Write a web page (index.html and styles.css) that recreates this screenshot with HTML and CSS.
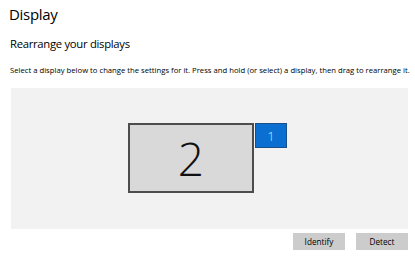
FILE: index.html
```html
<!DOCTYPE html>
<html lang="en">
<head>
	<meta charset="UTF-8" />
	<title>Display</title>
	<link rel="stylesheet" href="styles.css">
</head>
<body>
	<h1 class="title">Display</h1>
	<h2 class="subtitle">Rearrange your displays</h2>
	<p class="hint">Select a display below to change the settings for it. Press and hold (or select) a display, then drag to rearrange it.</p>

	<div class="arrange">
		<div class="monitor monitor-2">2</div>
		<div class="monitor monitor-1">1</div>
	</div>

	<div class="actions">
		<button>Identify</button>
		<button>Detect</button>
	</div>
</body>
</html>
```

FILE: styles.css
```css
body {
	margin: 0;
	padding: 0 7px 0 9px;
	font-family: "Open Sans", "Noto Sans", sans-serif;
	background-color: #fff;
	color: #000;
}
.title {
	margin: 0;
	padding-top: 3px;
	font-size: 15px;
	font-weight: normal;
	line-height: 22px;
	letter-spacing: -0.3px;
}
.subtitle {
	margin: 11px 0 0 1px;
	font-size: 11.3px;
	font-weight: normal;
	line-height: 16px;
	letter-spacing: -0.3px;
}
.hint {
	margin: 12px 0 0 1px;
	font-size: 7.7px;
	line-height: 12px;
	white-space: nowrap;
}
.arrange {
	position: relative;
	margin: 12px 0 0 2px;
	height: 141px;
	background-color: #f2f2f2;
}
.monitor {
	position: absolute;
	box-sizing: border-box;
	display: flex;
	align-items: center;
	justify-content: center;
	font-family: "Open Sans", sans-serif;
	font-weight: 300;
}
.monitor-2 {
	left: 117px;
	top: 35px;
	width: 126px;
	height: 70px;
	border: 2px solid #4d4d4d;
	background-color: #d9d9d9;
	font-size: 46px;
	color: #111;
}
.monitor-1 {
	left: 244px;
	top: 35px;
	width: 32px;
	height: 25px;
	border: 1px solid #1a4f8a;
	background-color: #0a6fd1;
	font-size: 13px;
	color: #cfe6ff;
}
.actions {
	display: flex;
	justify-content: flex-end;
	gap: 11px;
	margin-top: 4px;
}
.actions button {
	width: 52px;
	height: 17px;
	padding: 0;
	border: none;
	background-color: #cccccc;
	font-family: "Open Sans", sans-serif;
	font-size: 8.2px;
	color: #000;
}
```
